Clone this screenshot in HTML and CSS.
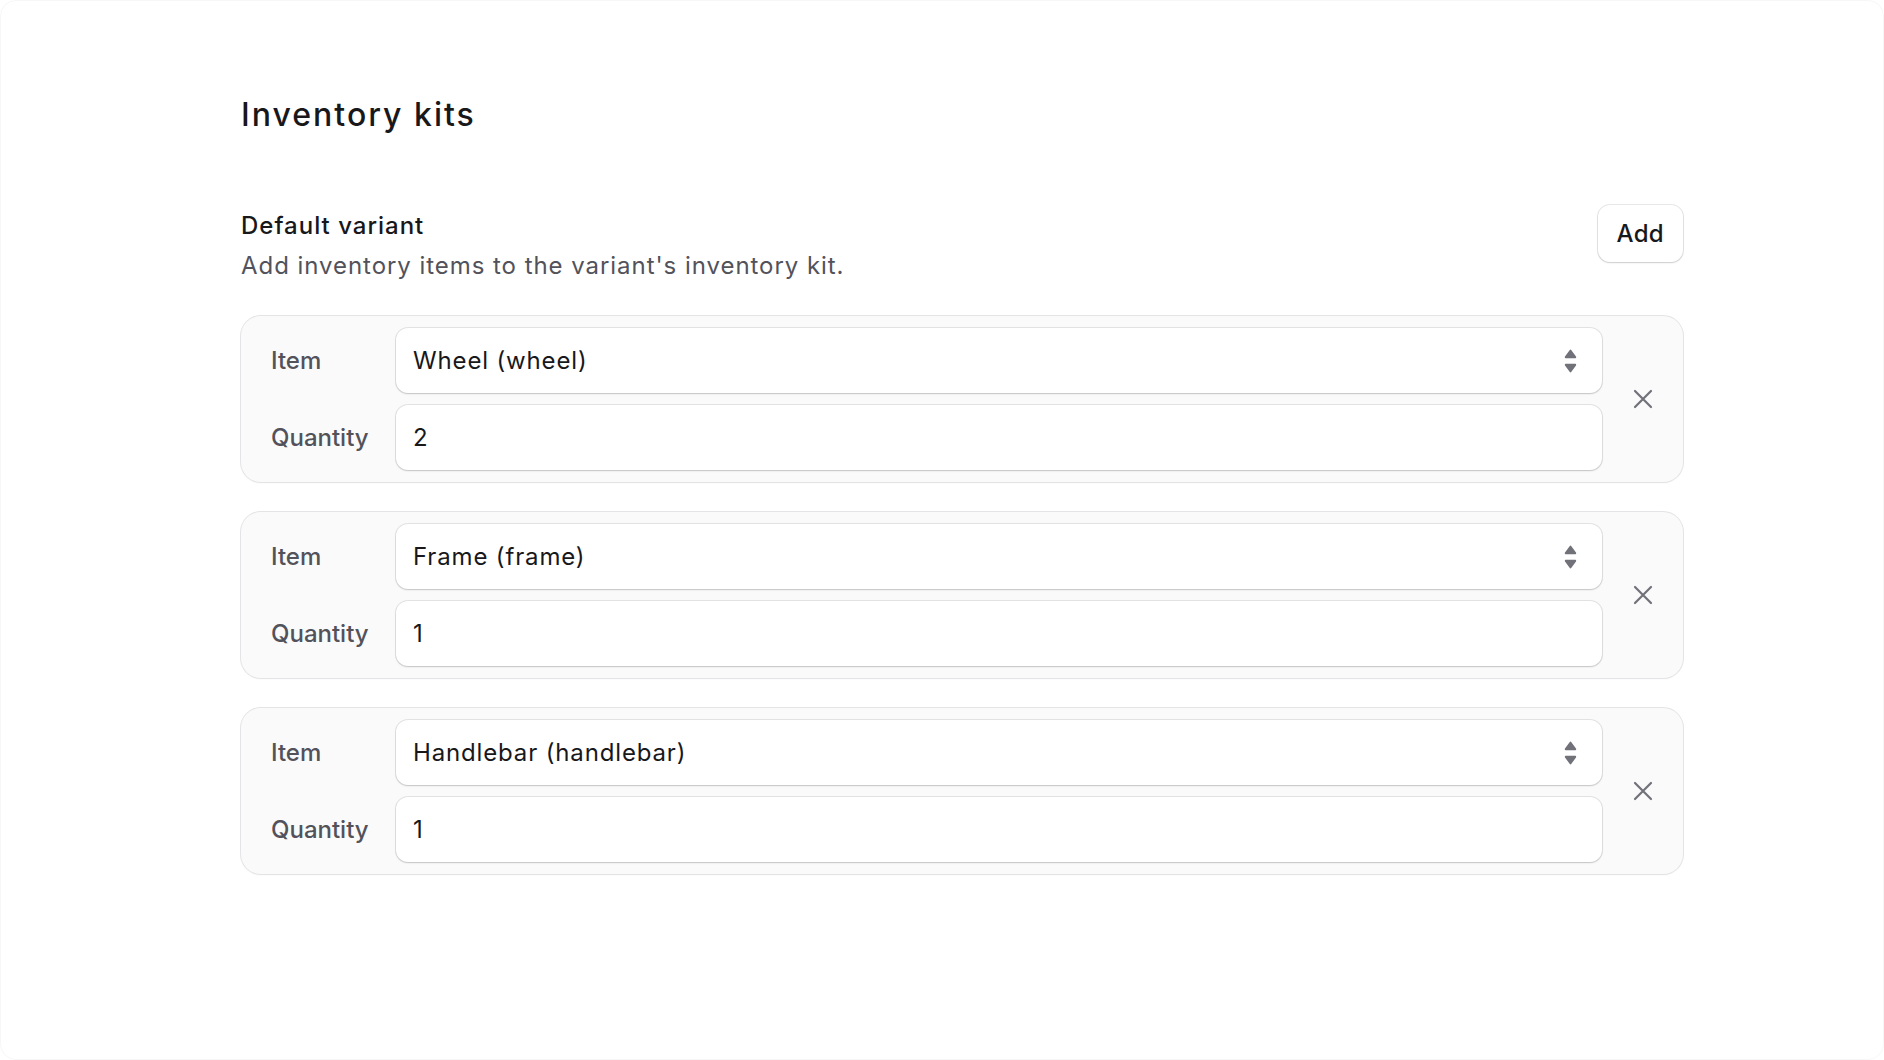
FILE: index.html
```html
<!DOCTYPE html>
<html lang="en">
<head>
<meta charset="utf-8">
<title>Inventory kits</title>
<link rel="stylesheet" href="styles.css">
</head>
<body>
<div class="frame">
  <main class="page">
    <h1 class="title">Inventory kits</h1>
    <section class="variant">
      <div class="variant-head">
        <div class="variant-text">
          <div class="variant-name">Default variant</div>
          <div class="variant-desc">Add inventory items to the variant's inventory kit.</div>
        </div>
        <button class="btn">Add</button>
      </div>
      <div class="kits">
        <div class="kit">
          <div class="fields">
            <div class="label">Item</div>
            <div class="control select">
              <span class="value">Wheel (wheel)</span>
              <svg class="chev" width="13" height="24" viewBox="0 0 13 24"><path d="M5.6 1.2a1.1 1.1 0 0 1 1.8 0l4.6 6.4c.5.7 0 1.6-.9 1.6H1.9c-.9 0-1.4-.9-.9-1.6z" fill="#71717a"/><path d="M5.6 22.8a1.1 1.1 0 0 0 1.8 0l4.6-6.4c.5-.7 0-1.6-.9-1.6H1.9c-.9 0-1.4.9-.9 1.6z" fill="#71717a"/></svg>
            </div>
            <div class="label">Quantity</div>
            <div class="control"><span class="value">2</span></div>
          </div>
          <div class="remove">
            <svg width="20" height="20" viewBox="0 0 20 20"><path d="M2 2L18 18M18 2L2 18" stroke="#71717a" stroke-width="2.2" stroke-linecap="round"/></svg>
          </div>
        </div>
        <div class="kit">
          <div class="fields">
            <div class="label">Item</div>
            <div class="control select">
              <span class="value">Frame (frame)</span>
              <svg class="chev" width="13" height="24" viewBox="0 0 13 24"><path d="M5.6 1.2a1.1 1.1 0 0 1 1.8 0l4.6 6.4c.5.7 0 1.6-.9 1.6H1.9c-.9 0-1.4-.9-.9-1.6z" fill="#71717a"/><path d="M5.6 22.8a1.1 1.1 0 0 0 1.8 0l4.6-6.4c.5-.7 0-1.6-.9-1.6H1.9c-.9 0-1.4.9-.9 1.6z" fill="#71717a"/></svg>
            </div>
            <div class="label">Quantity</div>
            <div class="control"><span class="value">1</span></div>
          </div>
          <div class="remove">
            <svg width="20" height="20" viewBox="0 0 20 20"><path d="M2 2L18 18M18 2L2 18" stroke="#71717a" stroke-width="2.2" stroke-linecap="round"/></svg>
          </div>
        </div>
        <div class="kit">
          <div class="fields">
            <div class="label">Item</div>
            <div class="control select">
              <span class="value">Handlebar (handlebar)</span>
              <svg class="chev" width="13" height="24" viewBox="0 0 13 24"><path d="M5.6 1.2a1.1 1.1 0 0 1 1.8 0l4.6 6.4c.5.7 0 1.6-.9 1.6H1.9c-.9 0-1.4-.9-.9-1.6z" fill="#71717a"/><path d="M5.6 22.8a1.1 1.1 0 0 0 1.8 0l4.6-6.4c.5-.7 0-1.6-.9-1.6H1.9c-.9 0-1.4.9-.9 1.6z" fill="#71717a"/></svg>
            </div>
            <div class="label">Quantity</div>
            <div class="control"><span class="value">1</span></div>
          </div>
          <div class="remove">
            <svg width="20" height="20" viewBox="0 0 20 20"><path d="M2 2L18 18M18 2L2 18" stroke="#71717a" stroke-width="2.2" stroke-linecap="round"/></svg>
          </div>
        </div>
      </div>
    </section>
  </main>
</div>
</body>
</html>
```

FILE: styles.css
```css
* { box-sizing: border-box; }
html, body { margin: 0; padding: 0; background: #ffffff; }
body {
  font-family: Inter, "Noto Sans", "Liberation Sans", sans-serif;
  color: #18181b;
}
.frame {
  width: 1884px;
  height: 1060px;
  border: 1px solid #f7f7f8;
  border-radius: 16px;
  background: #ffffff;
  overflow: hidden;
}
.page {
  width: 1442px;
  margin-left: 240px;
  padding-top: 94px;
}
.title {
  margin: 0;
  font-size: 32px;
  line-height: 40px;
  font-weight: 500;
  letter-spacing: 2px;
  color: #18181b;
}
.variant { margin-top: 70px; }
.variant-head {
  display: flex;
  justify-content: space-between;
  align-items: flex-start;
}
.variant-text { padding-top: 1px; }
.variant-name {
  font-size: 24px;
  line-height: 40px;
  font-weight: 500;
  letter-spacing: 1px;
  color: #18181b;
}
.variant-desc {
  font-size: 24px;
  line-height: 40px;
  font-weight: 400;
  letter-spacing: 0.95px;
  color: #52525b;
}
.btn {
  height: 57px;
  padding: 0 19px;
  border: none;
  border-radius: 12px;
  background: #ffffff;
  font-family: inherit;
  font-size: 24px;
  font-weight: 500;
  line-height: 32px;
  letter-spacing: 0.3px;
  color: #18181b;
  box-shadow: 0 0 0 1px rgba(0,0,0,0.09), 0 1px 2px 0 rgba(0,0,0,0.12);
}
.kits {
  margin-top: 30px;
  display: flex;
  flex-direction: column;
  gap: 30px;
}
.kit {
  display: flex;
  gap: 12px;
  padding: 12px;
  border-radius: 20px;
  background: #fafafa;
  box-shadow: 0 0 0 1px #e4e4e7, 0 1px 2px 0 rgba(0,0,0,0.06);
}
.fields {
  flex: 1;
  display: grid;
  grid-template-columns: 131px 1fr;
  row-gap: 12px;
  column-gap: 12px;
}
.label {
  display: flex;
  align-items: center;
  padding-left: 18px;
  font-size: 24px;
  font-weight: 500;
  color: #52525b;
}
.control {
  height: 65px;
  display: flex;
  align-items: center;
  justify-content: space-between;
  padding: 0 25px 0 17px;
  background: #ffffff;
  border-radius: 12px;
  box-shadow: 0 0 0 1px rgba(0,0,0,0.09), 0 1px 2px 0 rgba(0,0,0,0.14);
}
.value {
  font-size: 24px;
  font-weight: 400;
  letter-spacing: 0.85px;
  color: #18181b;
}
.chev { display: block; }
.remove {
  width: 57px;
  display: flex;
  align-items: center;
  justify-content: center;
}
.remove svg { display: block; }
```
